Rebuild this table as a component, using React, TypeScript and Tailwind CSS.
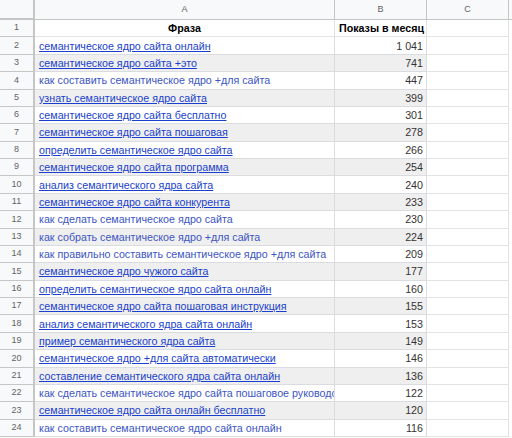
const rows: { phrase: string; count: string; link: boolean }[] = [
  { phrase: 'семантическое ядро сайта онлайн', count: '1 041', link: true },
  { phrase: 'семантическое ядро сайта +это', count: '741', link: true },
  { phrase: 'как составить семантическое ядро +для сайта', count: '447', link: false },
  { phrase: 'узнать семантическое ядро сайта', count: '399', link: true },
  { phrase: 'семантическое ядро сайта бесплатно', count: '301', link: true },
  { phrase: 'семантическое ядро сайта пошаговая', count: '278', link: true },
  { phrase: 'определить семантическое ядро сайта', count: '266', link: true },
  { phrase: 'семантическое ядро сайта программа', count: '254', link: true },
  { phrase: 'анализ семантического ядра сайта', count: '240', link: true },
  { phrase: 'семантическое ядро сайта конкурента', count: '233', link: true },
  { phrase: 'как сделать семантическое ядро сайта', count: '230', link: false },
  { phrase: 'как собрать семантическое ядро +для сайта', count: '224', link: false },
  { phrase: 'как правильно составить семантическое ядро +для сайта', count: '209', link: false },
  { phrase: 'семантическое ядро чужого сайта', count: '177', link: true },
  { phrase: 'определить семантическое ядро сайта онлайн', count: '160', link: true },
  { phrase: 'семантическое ядро сайта пошаговая инструкция', count: '155', link: true },
  { phrase: 'анализ семантического ядра сайта онлайн', count: '153', link: true },
  { phrase: 'пример семантического ядра сайта', count: '149', link: true },
  { phrase: 'семантическое ядро +для сайта автоматически', count: '146', link: true },
  { phrase: 'составление семантического ядра сайта онлайн', count: '136', link: true },
  { phrase: 'как сделать семантическое ядро сайта пошаговое руководство', count: '122', link: false },
  { phrase: 'семантическое ядро сайта онлайн бесплатно', count: '120', link: true },
  { phrase: 'как составить семантическое ядро сайта онлайн', count: '116', link: false },
];

function RowNum({ n }: { n: number }) {
  return (
    <div className="flex w-[35px] shrink-0 items-center justify-center border-r-2 border-b border-[#c4c7c5] bg-[#f8f9fa] text-[9px] text-[#5f6368]">
      {n}
    </div>
  );
}

export default function App() {
  return (
    <div
      className="h-[438px] w-[512px] overflow-hidden bg-white"
      style={{ fontFamily: '"Liberation Sans", Arial, sans-serif' }}
    >
      {/* column letters */}
      <div className="flex h-[20px] bg-[#f8f9fa] text-[9px] text-[#5f6368]">
        <div className="w-[35px] shrink-0 border-r-2 border-b-2 border-[#c4c7c5]" />
        <div className="flex w-[300px] shrink-0 items-center justify-center border-r border-b border-[#c4c7c5]">A</div>
        <div className="flex w-[92px] shrink-0 items-center justify-center border-r border-b border-[#c4c7c5]">B</div>
        <div className="flex w-[82px] shrink-0 items-center justify-center border-r border-b border-[#c4c7c5]">C</div>
        <div className="flex-1 border-b border-[#c4c7c5]" />
      </div>

      {/* header row */}
      <div className="flex h-[17.38px] text-[10.7px] text-black">
        <RowNum n={1} />
        <div className="flex w-[300px] shrink-0 items-center justify-center border-r border-b border-[#e2e3e3] font-bold">
          Фраза
        </div>
        <div className="flex w-[92px] shrink-0 items-center justify-end overflow-hidden whitespace-nowrap border-r border-b border-[#e2e3e3] pr-[2px] font-bold">
          Показы в месяц
        </div>
        <div className="w-[82px] shrink-0 border-r border-b border-[#e2e3e3]" />
        <div className="flex-1" />
      </div>

      {rows.map((r, i) => {
        const n = i + 2;
        const grey = n % 2 === 1;
        return (
          <div key={n} className="flex h-[17.38px] text-[10.7px]">
            <RowNum n={n} />
            <div
              className={`flex w-[300px] shrink-0 items-center overflow-hidden whitespace-nowrap border-r border-b border-[#dadce0] pl-[4px] ${
                grey ? 'bg-[#efefef]' : 'bg-white'
              }`}
            >
              <span className={r.link ? 'text-[#1a3fcc] underline underline-offset-[1px]' : 'text-[#3c55c4]'}>
                {r.phrase}
              </span>
            </div>
            <div
              className={`flex w-[92px] shrink-0 items-center justify-end border-r border-b border-[#dadce0] pr-[3px] text-[#333] ${
                grey ? 'bg-[#efefef]' : 'bg-white'
              }`}
            >
              {r.count}
            </div>
            <div className="w-[82px] shrink-0 border-r border-b border-[#e2e3e3]" />
            <div className="flex-1" />
          </div>
        );
      })}
    </div>
  );
}
